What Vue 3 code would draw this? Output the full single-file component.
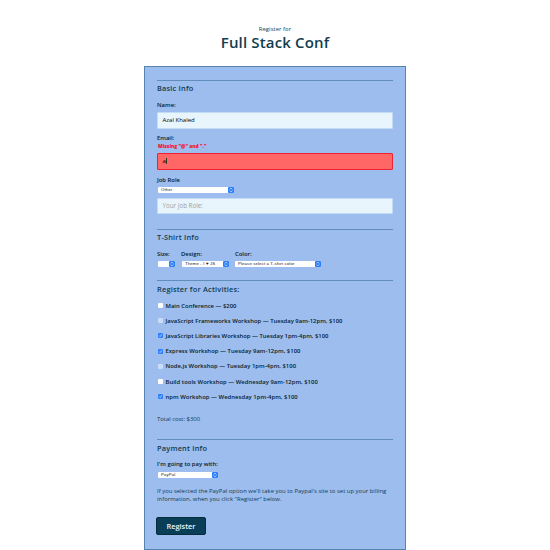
<script setup>
import { ref } from 'vue'

const activities = ref([
  { label: 'Main Conference — $200', state: 'open', ls: 0.01 },
  { label: 'JavaScript Frameworks Workshop — Tuesday 9am-12pm, $100', state: 'disabled', ls: 0.01 },
  { label: 'JavaScript Libraries Workshop — Tuesday 1pm-4pm, $100', state: 'checked', ls: 0 },
  { label: 'Express Workshop — Tuesday 9am-12pm, $100', state: 'checked', ls: 0.04 },
  { label: 'Node.js Workshop — Tuesday 1pm-4pm, $100', state: 'disabled', ls: 0.02 },
  { label: 'Build tools Workshop — Wednesday 9am-12pm, $100', state: 'open', ls: 0.03 },
  { label: 'npm Workshop — Wednesday 1pm-4pm, $100', state: 'checked', ls: 0.04 }
])
</script>

<template>
  <main class="page">
    <header class="head">
      <p class="kicker">Register for</p>
      <h1 class="title">Full Stack Conf</h1>
    </header>
    <form class="form" @submit.prevent>
      <section class="group basic">
        <h2 class="legend">Basic Info</h2>
        <p class="label">Name:</p>
        <div class="input">Azal Khaled</div>
        <p class="label email">Email:</p>
        <p class="error">Missing "@" and "."</p>
        <div class="input invalid">a<i class="caret"></i></div>
        <p class="label role">Job Role</p>
        <div class="select w-role"><span>Other</span><b class="arrows"><svg viewBox="0 0 6 6"><path d="M1.8 2.4 3 1.2l1.2 1.2M1.8 3.6 3 4.8l1.2-1.2" /></svg></b></div>
        <div class="input placeholder">Your Job Role:</div>
      </section>

      <section class="group shirt">
        <h2 class="legend">T-Shirt Info</h2>
        <div class="columns">
          <div>
            <p class="label">Size:</p>
            <div class="select w-size"><span></span><b class="arrows"><svg viewBox="0 0 6 6"><path d="M1.8 2.4 3 1.2l1.2 1.2M1.8 3.6 3 4.8l1.2-1.2" /></svg></b></div>
          </div>
          <div>
            <p class="label">Design:</p>
            <div class="select w-design"><span>Theme - I ♥ JS</span><b class="arrows"><svg viewBox="0 0 6 6"><path d="M1.8 2.4 3 1.2l1.2 1.2M1.8 3.6 3 4.8l1.2-1.2" /></svg></b></div>
          </div>
          <div>
            <p class="label">Color:</p>
            <div class="select w-color"><span>Please select a T-shirt color</span><b class="arrows"><svg viewBox="0 0 6 6"><path d="M1.8 2.4 3 1.2l1.2 1.2M1.8 3.6 3 4.8l1.2-1.2" /></svg></b></div>
          </div>
        </div>
      </section>

      <section class="group activities">
        <h2 class="legend">Register for Activities:</h2>
        <ul class="list">
          <li v-for="a in activities" :key="a.label">
            <span class="box" :class="a.state">
              <svg v-if="a.state === 'checked'" viewBox="0 0 6 6"><path d="M1.4 3.1 2.6 4.3 4.6 1.5" /></svg>
            </span>
            <span class="activity" :style="{ letterSpacing: a.ls + 'px' }">{{ a.label }}</span>
          </li>
        </ul>
        <p class="total">Total cost: $300</p>
      </section>

      <section class="group payment">
        <h2 class="legend">Payment Info</h2>
        <p class="label pay">I'm going to pay with:</p>
        <div class="select w-pay"><span>PayPal</span><b class="arrows"><svg viewBox="0 0 6 6"><path d="M1.8 2.4 3 1.2l1.2 1.2M1.8 3.6 3 4.8l1.2-1.2" /></svg></b></div>
        <p class="note">If you selected the PayPal option we'll take you to Paypal's site to set up your billing<br>information, when you click "Register" below.</p>
      </section>
      <button class="submit" type="submit">Register</button>
    </form>
  </main>
</template>

<style>
body {
  background: #fff;
}
</style>

<style scoped>
* {
  box-sizing: border-box;
  margin: 0;
  padding: 0;
}
.page {
  width: 550px;
  height: 550px;
  overflow: hidden;
  font-family: "Open Sans", "Noto Sans", sans-serif;
  font-size: 5.9px;
  color: #103c50;
}
.head {
  height: 66px;
  padding-top: 25px;
  text-align: center;
}
.kicker {
  height: 8px;
  line-height: 8px;
  letter-spacing: 0.05px;
}
.title {
  height: 18px;
  line-height: 18px;
  font-size: 15px;
  font-weight: 600;
  letter-spacing: 0.15px;
}
.form {
  width: 262px;
  height: 484px;
  margin: 0 auto;
  padding: 13px 12px 0;
  border: 1px solid #5585af;
  background: #9dbdee;
}
.group {
  border-top: 1px solid #5f8eba;
}
.basic { height: 149px; }
.shirt { height: 51px; }
.activities { height: 159px; }
.payment { height: 77px; }
.legend {
  height: 16px;
  line-height: 15px;
  font-size: 7.4px;
  font-weight: 650;
  letter-spacing: 0.2px;
}
.activities .legend, .payment .legend {
  line-height: 16px;
}
.label {
  height: 8px;
  margin-top: 4px;
  line-height: 8px;
  color: #071c2b;
  font-weight: 550;
}
.input {
  height: 17px;
  margin-top: 3px;
  padding-left: 4.5px;
  border: 1px solid #c1dcf4;
  border-radius: 1px;
  background: #e8f5fc;
  color: #000;
  font-size: 6px;
  font-weight: 500;
  line-height: 15px;
}
.label.email { margin-top: 5px; }
.error {
  height: 7px;
  padding-left: 1px;
  color: #f5132c;
  font-size: 4.9px;
  font-weight: 800;
  line-height: 8px;
}
.input.invalid {
  margin-top: 4px;
  border-color: #f02232;
  background: #ff6666;
}
.caret {
  display: inline-block;
  width: 0.5px;
  height: 6px;
  background: #333;
  vertical-align: -1px;
}
.label.role { margin-top: 6px; }
.select {
  display: flex;
  justify-content: space-between;
  height: 6px;
  margin-top: 3px;
  border-radius: 1px;
  background: #fff;
  color: #222;
  font-family: "Liberation Sans", sans-serif;
  font-size: 4.3px;
  letter-spacing: 0.13px;
  line-height: 6px;
  white-space: pre;
}
.select span { padding-left: 3px; }
.arrows {
  width: 6px;
  height: 6px;
  border-radius: 1px;
  background: #2d7ff9;
}
.arrows svg, .box svg {
  display: block;
  width: 6px;
  height: 6px;
  fill: none;
  stroke: #fff;
  stroke-width: 0.7;
}
.w-role { width: 76px; margin-left: 1px; }
.input.placeholder {
  height: 16px;
  margin-top: 5px;
  line-height: 14px;
  color: #9a9f9f;
  font-size: 6.2px;
  font-weight: 400;
  letter-spacing: 0.02px;
}
.columns {
  display: flex;
}
.w-size { width: 17px; margin-left: 1px; margin-right: 6px; }
.w-design { width: 47px; margin-left: 1px; margin-right: 6px; }
.w-color { width: 86px; }
.list {
  padding-top: 1px;
  list-style: none;
}
.list li {
  display: flex;
  align-items: center;
  height: 15.2px;
}
.box {
  width: 5px;
  height: 5px;
  margin: 0 3px 0 1px;
  border-radius: 1px;
  background: #fff;
}
.box.disabled { background: #cbdcf6; }
.box.checked { background: #2d7ff9; }
.box svg { width: 5px; height: 5px; }
.activity {
  margin-left: -0.5px;
  color: #071c2b;
  font-weight: 550;
  line-height: 8px;
  white-space: pre;
}
.total {
  margin-top: 11px;
  line-height: 8px;
}
.w-pay { width: 60px; margin-left: 1px; margin-top: 4px; }
.note {
  margin-top: 10px;
  line-height: 7.5px;
  letter-spacing: 0.02px;
  white-space: nowrap;
}
.submit {
  display: block;
  width: 50px;
  height: 18px;
  margin-top: 1px;
  margin-left: -1px;
  border: 1px solid #072c3c;
  border-radius: 2px;
  background: #083f57;
  color: #e8f5fc;
  font: 600 7.4px/16px "Open Sans", sans-serif;
}
</style>
